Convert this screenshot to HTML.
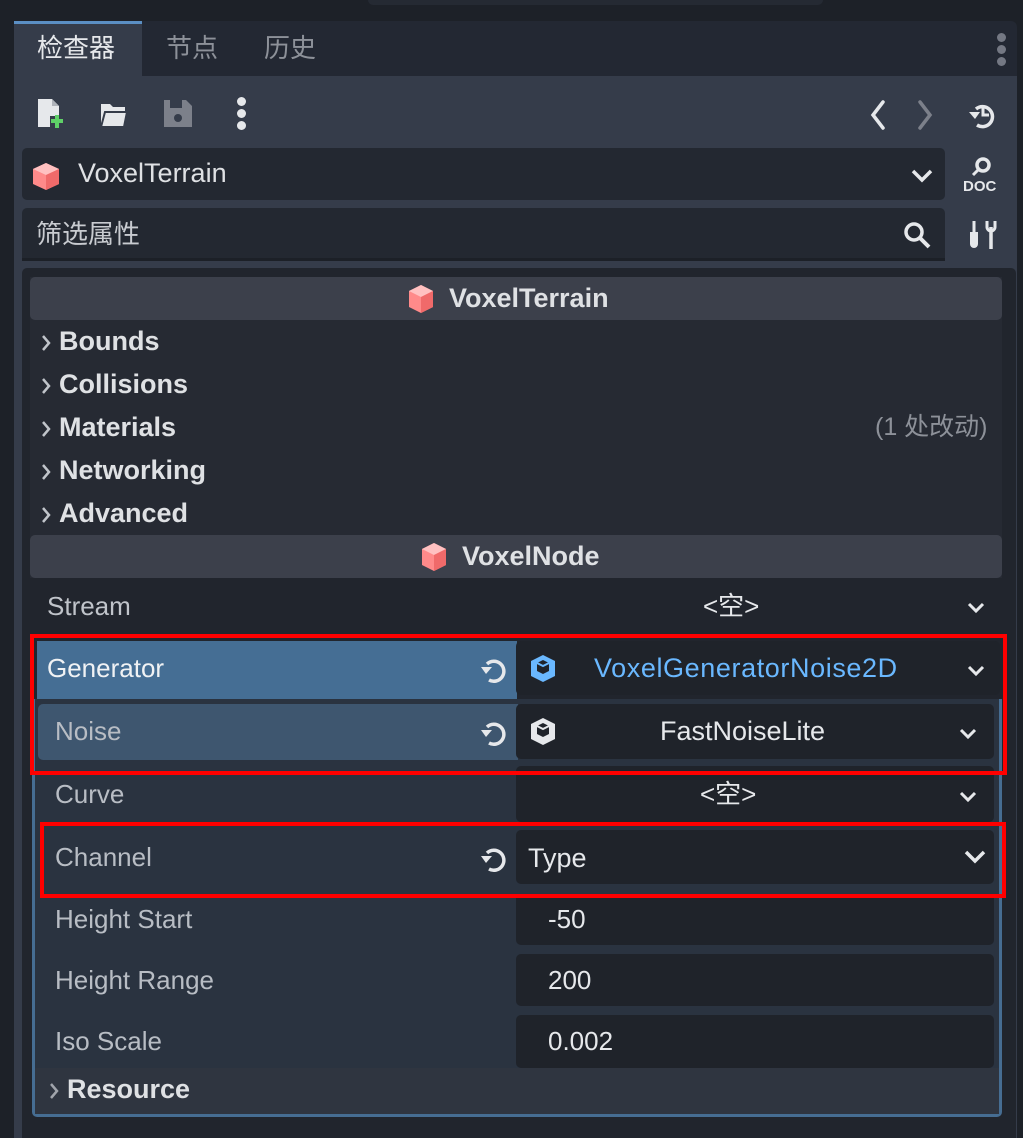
<!DOCTYPE html><html><head><meta charset="utf-8"><style>
*{box-sizing:border-box;margin:0;padding:0}
body{width:1023px;height:1138px;background:#1d2128;position:relative;overflow:hidden;font-family:"Liberation Sans","Noto Sans CJK SC",sans-serif;color:#dfe1e4;font-size:26px}
.a{position:absolute}
.t{position:absolute;white-space:nowrap;line-height:1}
.b{font-weight:bold}
.rb{position:absolute;border:4px solid #ff0000}
.ch{position:absolute}
</style></head><body>
<div class="a" style="left:368px;top:0;width:455px;height:5px;background:#252a33;border-radius:0 0 6px 6px"></div>
<div class="a" style="left:14px;top:21px;width:1003px;height:1117px;background:#232833;border-radius:6px 6px 0 0"></div>
<div class="a" style="left:14px;top:21px;width:128px;height:55px;background:#353c4a;border-top:3px solid #5b8fc4"></div>
<div class="t" style="left:37px;top:35px;font-size:26px;color:#e6e8eb">检查器</div>
<div class="t" style="left:166px;top:35px;font-size:26px;color:#8d9199">节点</div>
<div class="t" style="left:264px;top:35px;font-size:26px;color:#8d9199">历史</div>
<div class="a" style="left:997px;top:33px;width:9px;height:9px;border-radius:50%;background:#747883;box-shadow:0 12px 0 #747883,0 24px 0 #747883"></div>
<div class="a" style="left:14px;top:76px;width:1003px;height:1062px;background:#353c4a"></div>
<svg class="a" style="left:36px;top:98px" width="30" height="32"><path d="M2 1h14l7 7v21H2z" fill="#e6e8eb"/><path d="M16 1v7h7" fill="#b0b4bb"/><rect x="14" y="18" width="14" height="14" fill="#353c4a"/><path d="M21 17v13M15 23h12" stroke="#5fd068" stroke-width="4"/></svg>
<svg class="a" style="left:99px;top:100px" width="30" height="30"><path d="M2 4h9l3 3h12v20H2z" fill="#e6e8eb"/><path d="M6 12h22l-3 15H2z" fill="#e6e8eb" stroke="#353c4a" stroke-width="2"/></svg>
<svg class="a" style="left:163px;top:99px" width="30" height="30"><path d="M1 1h22l6 6v21H1z" fill="#7c808a"/><rect x="7" y="1" width="12" height="8" fill="#353c4a"/><circle cx="15" cy="19" r="4" fill="#353c4a"/></svg>
<div class="a" style="left:237px;top:97px;width:9px;height:9px;border-radius:50%;background:#e6e8eb;box-shadow:0 12px 0 #e6e8eb,0 24px 0 #e6e8eb"></div>
<svg class="a" style="left:868px;top:100px" width="20" height="30"><path d="M15 2L5 15l10 13" stroke="#e6e8eb" stroke-width="3.5" fill="none" stroke-linecap="round"/></svg>
<svg class="a" style="left:915px;top:100px" width="20" height="30"><path d="M5 2l10 13L5 28" stroke="#7c808a" stroke-width="3.5" fill="none" stroke-linecap="round"/></svg>
<svg class="a" style="left:966px;top:100px" width="32" height="30"><path d="M10 9a10 10 0 1 1 1 16" stroke="#e6e8eb" stroke-width="3.5" fill="none"/><path d="M3 12h11l-5 7z" fill="#e6e8eb"/><path d="M17 8v7h6" stroke="#e6e8eb" stroke-width="3" fill="none"/></svg>
<div class="a" style="left:22px;top:148px;width:923px;height:52px;background:#232831;border-radius:5px"></div>
<svg class="a" style="left:31px;top:161px" width="30" height="30"><path d="M15 2l13 6v15l-13 6-13-6V8z" fill="#ff8a8a"/><path d="M2 8l13 6 13-6-13-6z" fill="#ffc1c1"/><path d="M15 14v15l13-6V8z" fill="#f06a6a"/></svg>
<div class="t" style="left:78px;top:160px;font-size:27px">VoxelTerrain</div>
<svg class="a" style="left:910px;top:168px" width="24" height="16"><path d="M3 3l9 9 9-9" stroke="#e6e8eb" stroke-width="3.5" fill="none"/></svg>
<svg class="a" style="left:963px;top:155px" width="38" height="38"><circle cx="20" cy="10" r="6" stroke="#e6e8eb" stroke-width="3.5" fill="none"/><path d="M15 15l-5 5" stroke="#e6e8eb" stroke-width="3"/><text x="0" y="36" font-family="Liberation Sans" font-weight="bold" font-size="15" fill="#e6e8eb">DOC</text></svg>
<div class="a" style="left:22px;top:208px;width:923px;height:53px;background:#232831;border-radius:5px 5px 0 0;border-bottom:3px solid #1c2027"></div>
<div class="t" style="left:36px;top:221px;font-size:26px;color:#c8cbd0">筛选属性</div>
<svg class="a" style="left:902px;top:220px" width="30" height="30"><circle cx="12" cy="12" r="8" stroke="#e6e8eb" stroke-width="3.5" fill="none"/><path d="M18 18l9 9" stroke="#e6e8eb" stroke-width="4"/></svg>
<svg class="a" style="left:968px;top:219px" width="30" height="32"><path d="M6 2v11" stroke="#e6e8eb" stroke-width="3"/><path d="M2 13h8v12a4 4 0 0 1-8 0z" fill="#e6e8eb"/><path d="M19 2v6a4 4 0 0 0 8 0V2" stroke="#e6e8eb" stroke-width="3" fill="none"/><path d="M23 8v22" stroke="#e6e8eb" stroke-width="3.5"/></svg>
<div class="a" style="left:22px;top:268px;width:994px;height:870px;background:#21252d;border-radius:5px 5px 0 0"></div>
<div class="a" style="left:30px;top:277px;width:972px;height:301px;background:#262a33"></div>
<div class="a" style="left:30px;top:277px;width:972px;height:43px;background:#3c404b;border-radius:5px"></div>
<svg class="a" style="left:406px;top:284px" width="30" height="30"><path d="M15 1l12 6v16l-12 6-12-6V7z" fill="#ff8a8a"/><path d="M3 7l12 6 12-6-12-6z" fill="#ffc1c1"/><path d="M15 13v16l12-6V7z" fill="#f06a6a"/></svg>
<div class="t b" style="left:449px;top:285px;font-size:27px">VoxelTerrain</div>
<svg class="ch" style="left:40px;top:333px" width="12" height="20"><path d="M3 3l6 7-6 7" stroke="#c0c4ca" stroke-width="2.5" fill="none"/></svg><div class="t b" style="left:59px;top:328px;font-size:27px">Bounds</div>
<svg class="ch" style="left:40px;top:376px" width="12" height="20"><path d="M3 3l6 7-6 7" stroke="#c0c4ca" stroke-width="2.5" fill="none"/></svg><div class="t b" style="left:59px;top:371px;font-size:27px">Collisions</div>
<svg class="ch" style="left:40px;top:419px" width="12" height="20"><path d="M3 3l6 7-6 7" stroke="#c0c4ca" stroke-width="2.5" fill="none"/></svg><div class="t b" style="left:59px;top:414px;font-size:27px">Materials</div>
<div class="t" style="left:875px;top:415px;font-size:25px;color:#8d9199">(1 处改动)</div>
<svg class="ch" style="left:40px;top:462px" width="12" height="20"><path d="M3 3l6 7-6 7" stroke="#c0c4ca" stroke-width="2.5" fill="none"/></svg><div class="t b" style="left:59px;top:457px;font-size:27px">Networking</div>
<svg class="ch" style="left:40px;top:505px" width="12" height="20"><path d="M3 3l6 7-6 7" stroke="#c0c4ca" stroke-width="2.5" fill="none"/></svg><div class="t b" style="left:59px;top:500px;font-size:27px">Advanced</div>
<div class="a" style="left:30px;top:535px;width:972px;height:43px;background:#3c404b;border-radius:5px"></div>
<svg class="a" style="left:419px;top:542px" width="30" height="30"><path d="M15 1l12 6v16l-12 6-12-6V7z" fill="#ff8a8a"/><path d="M3 7l12 6 12-6-12-6z" fill="#ffc1c1"/><path d="M15 13v16l12-6V7z" fill="#f06a6a"/></svg>
<div class="t b" style="left:462px;top:543px;font-size:27px">VoxelNode</div>
<div class="t" style="left:47px;top:593px;color:#c0c4ca">Stream</div>
<div class="t" style="left:703px;top:593px;color:#e6e8eb">&lt;空&gt;</div>
<svg class="a" style="left:966px;top:601px" width="20" height="14"><path d="M3 3l7 7 7-7" stroke="#e6e8eb" stroke-width="3" fill="none"/></svg>
<div class="a" style="left:37px;top:641px;width:480px;height:58px;background:#456e94"></div>
<div class="a" style="left:516px;top:641px;width:484px;height:54px;background:#1f232a;border-radius:5px"></div>
<div class="t" style="left:47px;top:655px;color:#f0f2f4">Generator</div>
<svg class="a" style="left:478px;top:654px" width="32" height="32"><path d="M9 10a10 10 0 1 1 2 16" stroke="#e6e8eb" stroke-width="3.5" fill="none"/><path d="M3 13h11l-6 7z" fill="#e6e8eb"/></svg>
<svg class="a" style="left:528px;top:653px" width="32" height="32"><path d="M15 2l12 6v15l-12 6-12-6V8z" fill="#6ab8ff"/><path d="M9 10l6-3 6 3v8l-6 3-6-3z" fill="#1f232a"/><path d="M9 10l6 3 6-3" stroke="#6ab8ff" stroke-width="2" fill="none"/></svg>
<div class="t" style="left:594px;top:655px;color:#6ab8ff;font-size:27px;letter-spacing:0.6px">VoxelGeneratorNoise2D</div>
<svg class="a" style="left:966px;top:664px" width="20" height="14"><path d="M3 3l7 7 7-7" stroke="#e6e8eb" stroke-width="3" fill="none"/></svg>
<div class="a" style="left:32px;top:699px;width:970px;height:418px;background:#2a3340;border:3px solid #466d92;border-top:none;border-radius:0 0 5px 5px"></div>
<div class="a" style="left:38px;top:704px;width:480px;height:56px;background:#3e566f;border-radius:5px 0 0 5px"></div>
<div class="a" style="left:516px;top:704px;width:478px;height:55px;background:#1f232a;border-radius:5px"></div>
<div class="t" style="left:55px;top:718px;color:#b8bdc4">Noise</div>
<svg class="a" style="left:478px;top:717px" width="32" height="32"><path d="M9 10a10 10 0 1 1 2 16" stroke="#e6e8eb" stroke-width="3.5" fill="none"/><path d="M3 13h11l-6 7z" fill="#e6e8eb"/></svg>
<svg class="a" style="left:528px;top:716px" width="32" height="32"><path d="M15 2l12 6v15l-12 6-12-6V8z" fill="#e6e8eb"/><path d="M9 10l6-3 6 3v8l-6 3-6-3z" fill="#1f232a"/><path d="M9 10l6 3 6-3" stroke="#e6e8eb" stroke-width="2" fill="none"/></svg>
<div class="t" style="left:660px;top:718px;color:#e6e8eb;font-size:27px">FastNoiseLite</div>
<svg class="a" style="left:958px;top:727px" width="20" height="14"><path d="M3 3l7 7 7-7" stroke="#e6e8eb" stroke-width="3" fill="none"/></svg>
<div class="a" style="left:516px;top:766px;width:478px;height:56px;background:#1f232a;border-radius:5px"></div>
<div class="t" style="left:55px;top:781px;color:#b8bdc4">Curve</div>
<div class="t" style="left:700px;top:781px;color:#e6e8eb">&lt;空&gt;</div>
<svg class="a" style="left:958px;top:790px" width="20" height="14"><path d="M3 3l7 7 7-7" stroke="#e6e8eb" stroke-width="3" fill="none"/></svg>
<div class="a" style="left:516px;top:830px;width:478px;height:54px;background:#1f232a;border-radius:5px"></div>
<div class="t" style="left:55px;top:844px;color:#b8bdc4">Channel</div>
<svg class="a" style="left:478px;top:843px" width="32" height="32"><path d="M9 10a10 10 0 1 1 2 16" stroke="#e6e8eb" stroke-width="3.5" fill="none"/><path d="M3 13h11l-6 7z" fill="#e6e8eb"/></svg>
<div class="t" style="left:528px;top:845px;color:#e6e8eb;font-size:27px">Type</div>
<svg class="a" style="left:963px;top:849px" width="24" height="16"><path d="M3 3l9 9 9-9" stroke="#e6e8eb" stroke-width="3.5" fill="none"/></svg>
<div class="a" style="left:516px;top:894px;width:478px;height:51px;background:#1f232a;border-radius:0 0 5px 5px"></div>
<div class="t" style="left:55px;top:906px;color:#b8bdc4">Height Start</div>
<div class="t" style="left:548px;top:906px;color:#e6e8eb">-50</div>
<div class="a" style="left:516px;top:954px;width:478px;height:52px;background:#1f232a;border-radius:5px"></div>
<div class="t" style="left:55px;top:967px;color:#b8bdc4">Height Range</div>
<div class="t" style="left:548px;top:967px;color:#e6e8eb">200</div>
<div class="a" style="left:516px;top:1015px;width:478px;height:53px;background:#1f232a;border-radius:5px"></div>
<div class="t" style="left:55px;top:1028px;color:#b8bdc4">Iso Scale</div>
<div class="t" style="left:548px;top:1028px;color:#e6e8eb">0.002</div>
<div class="a" style="left:35px;top:1068px;width:964px;height:46px;background:#2f3540"></div>
<svg class="ch" style="left:48px;top:1081px" width="12" height="20"><path d="M3 3l6 7-6 7" stroke="#a0a4ab" stroke-width="2.5" fill="none"/></svg>
<div class="t b" style="left:67px;top:1076px;font-size:27px;color:#dfe1e4">Resource</div>
<div class="rb" style="left:30px;top:634px;width:977px;height:141px"></div>
<div class="rb" style="left:40px;top:822px;width:966px;height:76px"></div>
</body></html>
